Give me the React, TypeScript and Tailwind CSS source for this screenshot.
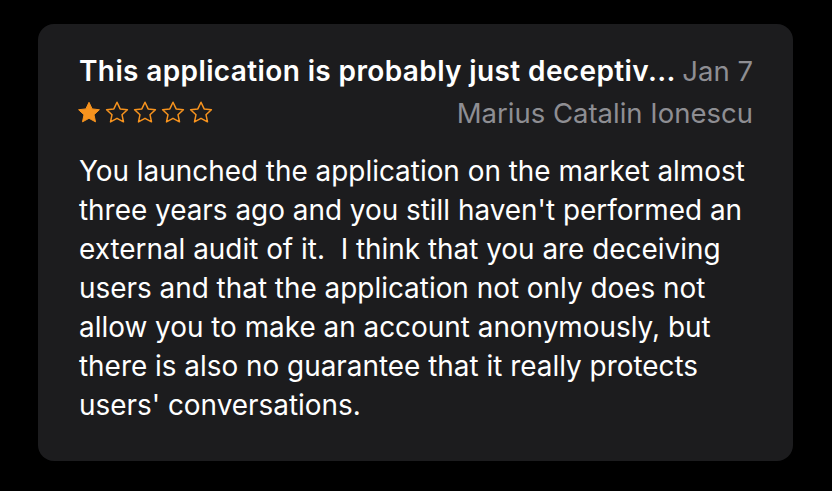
import React from "react";

function Star({ filled }: { filled: boolean }) {
  return (
    <svg width="28" height="24" viewBox="0 0 28 24" className="shrink-0">
      <path
        d="M13 1.3l3.15 6.6 7.25.85-5.4 4.95 1.5 7.15L13 17.3l-6.5 3.55 1.5-7.15-5.4-4.95 7.25-.85z"
        fill={filled ? "#f7931e" : "none"}
        stroke="#f7931e"
        strokeWidth={filled ? 1 : 1.5}
        strokeLinejoin="round"
      />
    </svg>
  );
}

export default function App() {
  return (
    <div className="w-[832px] h-[491px] bg-black flex pt-[24px] pl-[38px]" style={{ fontFamily: "Inter, 'Noto Sans', sans-serif" }}>
      <div className="w-[755px] h-[437px] bg-[#1c1c1e] rounded-[16px] pl-[41px] pr-[40px] pt-[30px]">
        <div className="flex items-baseline justify-between">
          <div className="text-white font-semibold text-[28px] leading-[34px] tracking-[0.38px]">This application is probably just deceptiv...</div>
          <div className="text-[#8e8e93] text-[27.5px] leading-[34px]">Jan 7</div>
        </div>
        <div className="flex items-center justify-between mt-[8px]">
          <div className="flex -ml-[3px]">
            <Star filled />
            <Star filled={false} />
            <Star filled={false} />
            <Star filled={false} />
            <Star filled={false} />
          </div>
          <div className="text-[#8e8e93] text-[27.5px] leading-[34px]">Marius Catalin Ionescu</div>
        </div>
        <p className="text-white text-[27.9px] leading-[39px] mt-[22px] whitespace-pre-wrap">
          {"You launched the application on the market almost\nthree years ago and you still haven't performed an\nexternal audit of it.  I think that you are deceiving\nusers and that the application not only does not\nallow you to make an account anonymously, but\nthere is also no guarantee that it really protects\nusers' conversations."}
        </p>
      </div>
    </div>
  );
}
